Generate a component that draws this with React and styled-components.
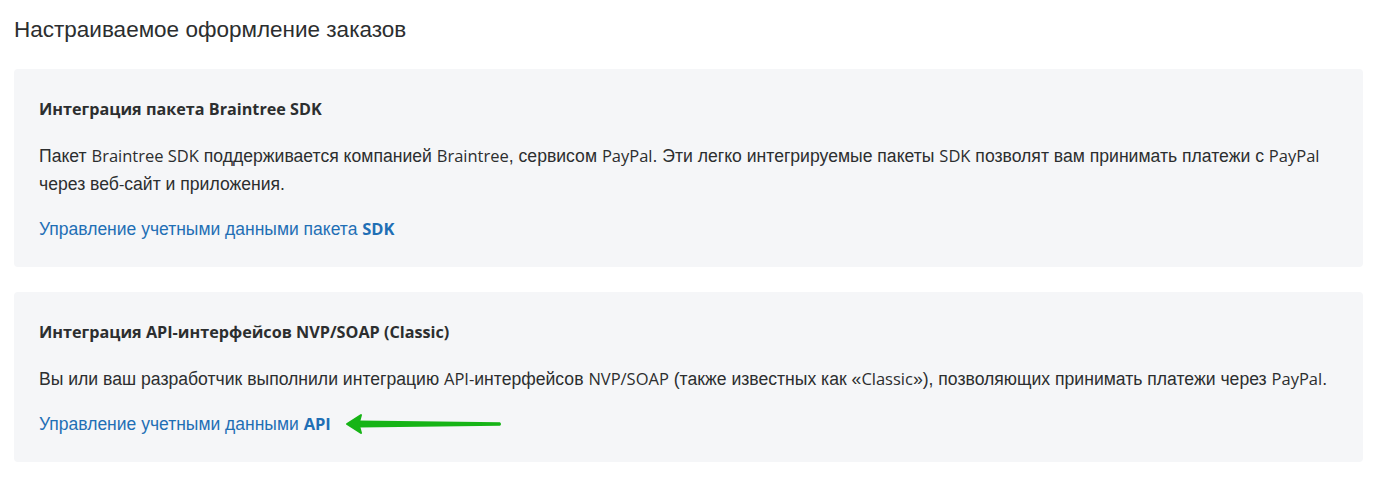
import styled, { createGlobalStyle } from "styled-components";

const GlobalStyle = createGlobalStyle`
  body {
    margin: 0;
    background: #fff;
    font-family: "Liberation Sans", Arial, sans-serif;
    color: #2c2e2f;
  }
`;

const Page = styled.main`
  padding: 17px 28px 20px 14px;
`;

const Heading = styled.h2`
  margin: 0 0 26px;
  font-size: 22.5px;
  line-height: 26px;
  font-weight: 400;
  color: #2c2e2f;
`;

const Card = styled.section`
  background: #f5f6f8;
  border-radius: 4px;
  padding: 30px 24px 24px 25px;
  margin-bottom: 25px;
`;

const CardTitle = styled.h3`
  margin: 0 0 23px;
  font-family: "Open Sans", "Noto Sans", sans-serif;
  font-size: 16.2px;
  line-height: 20px;
  font-weight: 700;
  color: #2c2e2f;
`;

const Text = styled.p`
  margin: 0 0 17px;
  font-size: 17.6px;
  line-height: 28px;
  color: #2c2e2f;
`;

const Latin = styled.span`
  font-family: "Open Sans", "Noto Sans", sans-serif;
  font-size: 16.5px;
  font-weight: ${(p) => (p.$bold ? 700 : 400)};
`;

const LinkRow = styled.div`
  display: flex;
  align-items: center;
  height: 28px;
`;

const Link = styled.a`
  font-size: 17.5px;
  line-height: 28px;
  color: #1f6fb5;
  text-decoration: none;
  cursor: pointer;
`;

const Arrow = styled.svg`
  margin-left: 14px;
  display: block;
`;

function PointerArrow() {
  return (
    <Arrow width="160" height="24" viewBox="0 0 160 24">
      <path d="M14 8.5 L155 10.2 Q157 12 155 13.8 L14 15.5 Z" fill="#16b416" />
      <path d="M2 12 L16 3 L13.5 12 L16 21 Z" fill="#16b416" stroke="#16b416" strokeWidth="2" strokeLinejoin="round" />
    </Arrow>
  );
}

export default function App() {
  return (
    <Page>
      <GlobalStyle />
      <Heading>Настраиваемое оформление заказов</Heading>

      <Card>
        <CardTitle>Интеграция пакета Braintree SDK</CardTitle>
        <Text>
          Пакет <Latin>Braintree SDK</Latin> поддерживается компанией <Latin>Braintree</Latin>, сервисом{" "}
          <Latin>PayPal</Latin>. Эти легко интегрируемые пакеты <Latin>SDK</Latin> позволят вам принимать платежи с{" "}
          <Latin>PayPal</Latin>
          <br />
          через веб<Latin>-</Latin>сайт и приложения.
        </Text>
        <LinkRow>
          <Link>
            Управление учетными данными пакета <Latin $bold>SDK</Latin>
          </Link>
        </LinkRow>
      </Card>

      <Card>
        <CardTitle>Интеграция API-интерфейсов NVP/SOAP (Classic)</CardTitle>
        <Text>
          Вы или ваш разработчик выполнили интеграцию <Latin>API-</Latin>интерфейсов <Latin>NVP/SOAP</Latin> (также
          известных как «<Latin>Classic</Latin>»), позволяющих принимать платежи через <Latin>PayPal</Latin>.
        </Text>
        <LinkRow>
          <Link>
            Управление учетными данными <Latin $bold>API</Latin>
          </Link>
          <PointerArrow />
        </LinkRow>
      </Card>
    </Page>
  );
}
